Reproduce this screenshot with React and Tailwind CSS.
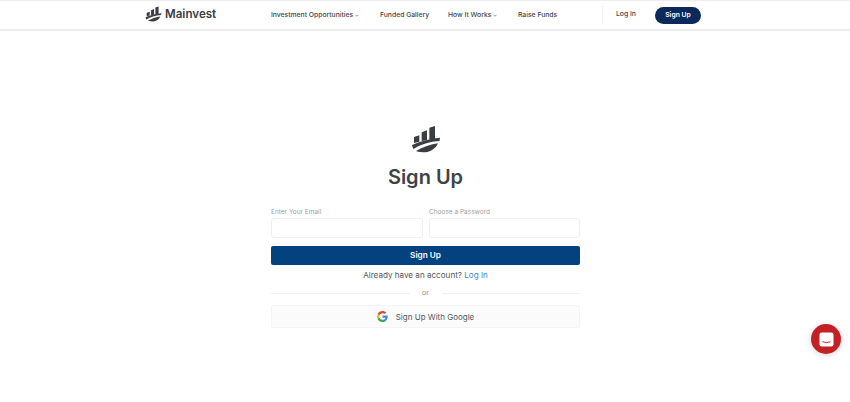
import React from 'react';

const font = { fontFamily: 'Inter, sans-serif' };

const Logo = ({ className }) => (
  <svg viewBox="125 30 90 90" className={className} fill="#3a3d42">
    <path d="M134 66 L150 61 V80 L134 84 Z" />
    <path d="M157 52 L173 46 V76 L157 78 Z" />
    <path d="M180 38 L197 33 V72 L180 74 Z" />
    <path d="M128 90 C155 78 185 70 212 68 C212 72 211 75 210 78 C180 80 155 88 132 102 C130 98 129 94 128 90 Z" />
    <path d="M140 108 C160 96 185 88 206 85 C200 100 185 110 168 112 C158 112 148 111 140 108 Z" />
  </svg>
);

const Caret = () => (
  <svg viewBox="0 0 8 5" className="w-[4px] h-[3px] ml-[2px] mt-[1px]" fill="none" stroke="#555" strokeWidth="1.2">
    <path d="M1 1 L4 4 L7 1" />
  </svg>
);

const GoogleIcon = () => (
  <svg viewBox="0 0 48 48" className="w-[11px] h-[11px]">
    <path fill="#EA4335" d="M24 9.5c3.5 0 6.7 1.2 9.2 3.6l6.9-6.9C35.9 2.4 30.4 0 24 0 14.6 0 6.5 5.4 2.6 13.2l8 6.2C12.5 13.6 17.8 9.5 24 9.5z" />
    <path fill="#4285F4" d="M46.9 24.5c0-1.6-.1-3.1-.4-4.5H24v9h12.9c-.6 3-2.2 5.5-4.8 7.2l7.7 6c4.5-4.2 7.1-10.3 7.1-17.7z" />
    <path fill="#FBBC05" d="M10.5 28.6c-.5-1.4-.8-3-.8-4.6s.3-3.2.8-4.6l-8-6.2C.9 16.5 0 20.1 0 24s.9 7.5 2.6 10.8l7.9-6.2z" />
    <path fill="#34A853" d="M24 48c6.5 0 11.9-2.1 15.9-5.8l-7.7-6c-2.2 1.5-5 2.3-8.2 2.3-6.2 0-11.5-4.1-13.4-9.9l-8 6.2C6.5 42.6 14.6 48 24 48z" />
  </svg>
);

const NavLink = ({ label, caret, className }) => (
  <div className={`flex items-center text-[6.8px] font-medium text-[#3f444b] ${className}`}>
    {label}
    {caret && <Caret />}
  </div>
);

const Field = ({ label, className }) => (
  <div className={className}>
    <label className="block h-[11px] text-[6.5px] leading-[11px] text-[#9b9fa5]">{label}</label>
    <input type="text" className="block w-full h-[20px] bg-white border border-[#eeeff1] rounded-[3px]" />
  </div>
);

const App = () => {
  return (
    <div className="relative w-[850px] h-[402px] bg-white overflow-hidden" style={font}>
      {/* Top Nav */}
      <header className="flex items-center h-[31px] bg-white border-t border-[#eeeeee] border-b-2 border-b-[#ebebeb]">
        <div className="flex items-center w-[130px] ml-[145px]">
          <Logo className="w-[17px] h-[17px]" />
          <span className="ml-[3px] text-[11.6px] font-semibold text-[#3a3d42]">Mainvest</span>
        </div>
        <NavLink label="Investment Opportunities" caret className="ml-[-4px] w-[109px]" />
        <NavLink label="Funded Gallery" className="w-[68px]" />
        <NavLink label="How It Works" caret className="w-[70px]" />
        <NavLink label="Raise Funds" className="w-[84px]" />
        <div className="w-px h-[18px] bg-[#f4f4f4]" />
        <div className="ml-[13px] w-[39px] text-[6.8px] font-medium text-[#3f444b] mb-[2px]">Log In</div>
        <button className="w-[46px] h-[17px] rounded-full bg-[#0b2a5b] text-white text-[6.8px] font-semibold">Sign Up</button>
      </header>

      {/* Sign up form */}
      <main className="flex flex-col items-center pt-[94px] pl-[1px]">
        <Logo className="w-[30px] h-[30px]" />
        <h1 className="mt-[7px] text-[20px] leading-[30px] font-semibold text-[#3f4349]">Sign Up</h1>
        <form className="w-[309px] mt-[15px]">
          <div className="flex gap-[6px]">
            <Field label="Enter Your Email" className="w-[152px]" />
            <Field label="Choose a Password" className="w-[151px]" />
          </div>
          <button type="button" className="w-full h-[19px] mt-[8px] rounded-[2px] bg-[#03417f] text-white text-[8.2px] font-semibold">Sign Up</button>
          <p className="mt-[4px] h-[13px] text-center text-[8.1px] leading-[13px] text-[#54585e]">
            Already have an account? <span className="text-[#3d8ac4]">Log In</span>
          </p>
          <div className="flex items-center mt-[6px] h-[10px]">
            <div className="flex-1 h-px bg-[#f0f0f0]" />
            <span className="w-[32px] text-center text-[7px] text-[#8a8d92]">or</span>
            <div className="flex-1 h-px bg-[#f0f0f0]" />
          </div>
          <button type="button" className="flex items-center justify-center w-full h-[23px] mt-[7px] bg-[#fbfbfc] border border-[#f3f4f5] rounded-[2px] text-[8px] text-[#54585e]">
            <GoogleIcon />
            <span className="ml-[8px]">Sign Up With Google</span>
          </button>
        </form>
      </main>

      {/* Chat launcher */}
      <div className="absolute left-[811px] top-[324px] flex items-center justify-center w-[30px] h-[30px] rounded-full bg-[#c32026] shadow-[0_1px_6px_rgba(0,0,0,0.18)]">
        <svg viewBox="0 0 16 16" className="w-[15px] h-[15px]">
          <rect x="0.5" y="0.5" width="15" height="15" rx="2.5" fill="#fff" />
          <path d="M4 10.5 Q8 12.5 12 10.5" fill="none" stroke="#c32026" strokeWidth="1" strokeLinecap="round" />
        </svg>
      </div>
    </div>
  );
};

export default App;
